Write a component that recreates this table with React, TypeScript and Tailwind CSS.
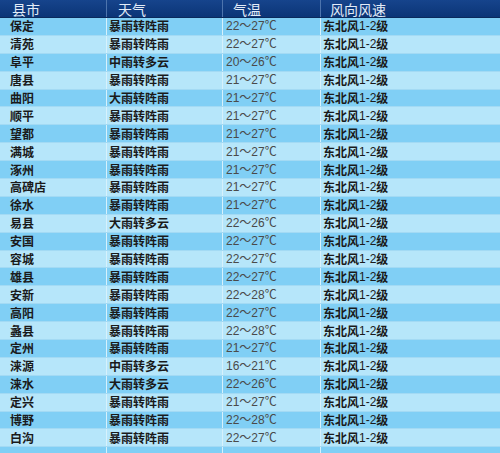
import React from 'react';

type Row = { city: string; weather: string; temp: string };

const rows: Row[] = [
  { city: '保定', weather: '暴雨转阵雨', temp: '22～27℃' },
  { city: '清苑', weather: '暴雨转阵雨', temp: '22～27℃' },
  { city: '阜平', weather: '中雨转多云', temp: '20～26℃' },
  { city: '唐县', weather: '暴雨转阵雨', temp: '21～27℃' },
  { city: '曲阳', weather: '大雨转阵雨', temp: '21～27℃' },
  { city: '顺平', weather: '暴雨转阵雨', temp: '21～27℃' },
  { city: '望都', weather: '暴雨转阵雨', temp: '21～27℃' },
  { city: '满城', weather: '暴雨转阵雨', temp: '21～27℃' },
  { city: '涿州', weather: '暴雨转阵雨', temp: '21～27℃' },
  { city: '高碑店', weather: '暴雨转阵雨', temp: '21～27℃' },
  { city: '徐水', weather: '暴雨转阵雨', temp: '21～27℃' },
  { city: '易县', weather: '大雨转多云', temp: '22～26℃' },
  { city: '安国', weather: '暴雨转阵雨', temp: '22～27℃' },
  { city: '容城', weather: '暴雨转阵雨', temp: '22～27℃' },
  { city: '雄县', weather: '暴雨转阵雨', temp: '22～27℃' },
  { city: '安新', weather: '暴雨转阵雨', temp: '22～28℃' },
  { city: '高阳', weather: '暴雨转阵雨', temp: '22～27℃' },
  { city: '蠡县', weather: '暴雨转阵雨', temp: '22～28℃' },
  { city: '定州', weather: '暴雨转阵雨', temp: '21～27℃' },
  { city: '涞源', weather: '中雨转多云', temp: '16～21℃' },
  { city: '涞水', weather: '大雨转多云', temp: '22～26℃' },
  { city: '定兴', weather: '暴雨转阵雨', temp: '21～27℃' },
  { city: '博野', weather: '暴雨转阵雨', temp: '22～28℃' },
  { city: '白沟', weather: '暴雨转阵雨', temp: '22～27℃' },
];

const cjk = "font-['Noto_Sans_CJK_SC','Liberation_Sans',sans-serif]";

export default function App() {
  return (
    <div className={`w-[500px] h-[453px] overflow-hidden bg-[#b6e6fa] ${cjk}`}>
      {/* header */}
      <div className="grid grid-cols-[107px_116px_98px_1fr] h-[18px] bg-gradient-to-b from-[#16448c] to-[#0b3577] border-b border-[#0a2a5c] text-[14px] leading-none text-[#e3ecf8]">
        <div className="flex items-center border-r border-[#4d74ad] pl-[12px]">县市</div>
        <div className="flex items-center border-r border-[#4d74ad] pl-[11px]">天气</div>
        <div className="flex items-center border-r border-[#4d74ad] pl-[10px]">气温</div>
        <div className="flex items-center pl-[9px]">风向风速</div>
      </div>

      {rows.map((r, i) => (
        <div
          key={r.city}
          className={`grid grid-cols-[107px_116px_98px_1fr] h-[17.9px] border-b border-[#a3daf4] text-[12px] leading-none ${
            i % 2 === 0 ? 'bg-[#80cff5]' : 'bg-[#b6e6fa]'
          }`}
        >
          <div className="flex items-center border-r border-[#d6f1fc] pl-[10px] font-bold text-[#1a1a1a]">{r.city}</div>
          <div className="flex items-center border-r border-[#d6f1fc] pl-[2px] font-bold text-[#1a1a1a]">{r.weather}</div>
          <div className="flex items-center border-r border-[#d6f1fc] pl-[3px] font-['Liberation_Sans','Noto_Sans_CJK_SC',sans-serif] text-[#4a4a4a]">
            {r.temp}
          </div>
          <div className="flex items-center pl-[2px] font-bold text-[#1a1a1a]">
            东北风<span className="font-normal font-['Liberation_Sans',sans-serif]">1-2</span>级
          </div>
        </div>
      ))}

      <div className="grid grid-cols-[107px_116px_98px_1fr] h-[18px] bg-[#80cff5]">
        <div className="border-r border-[#d6f1fc]" />
        <div className="border-r border-[#d6f1fc]" />
        <div className="border-r border-[#d6f1fc]" />
        <div />
      </div>
    </div>
  );
}
